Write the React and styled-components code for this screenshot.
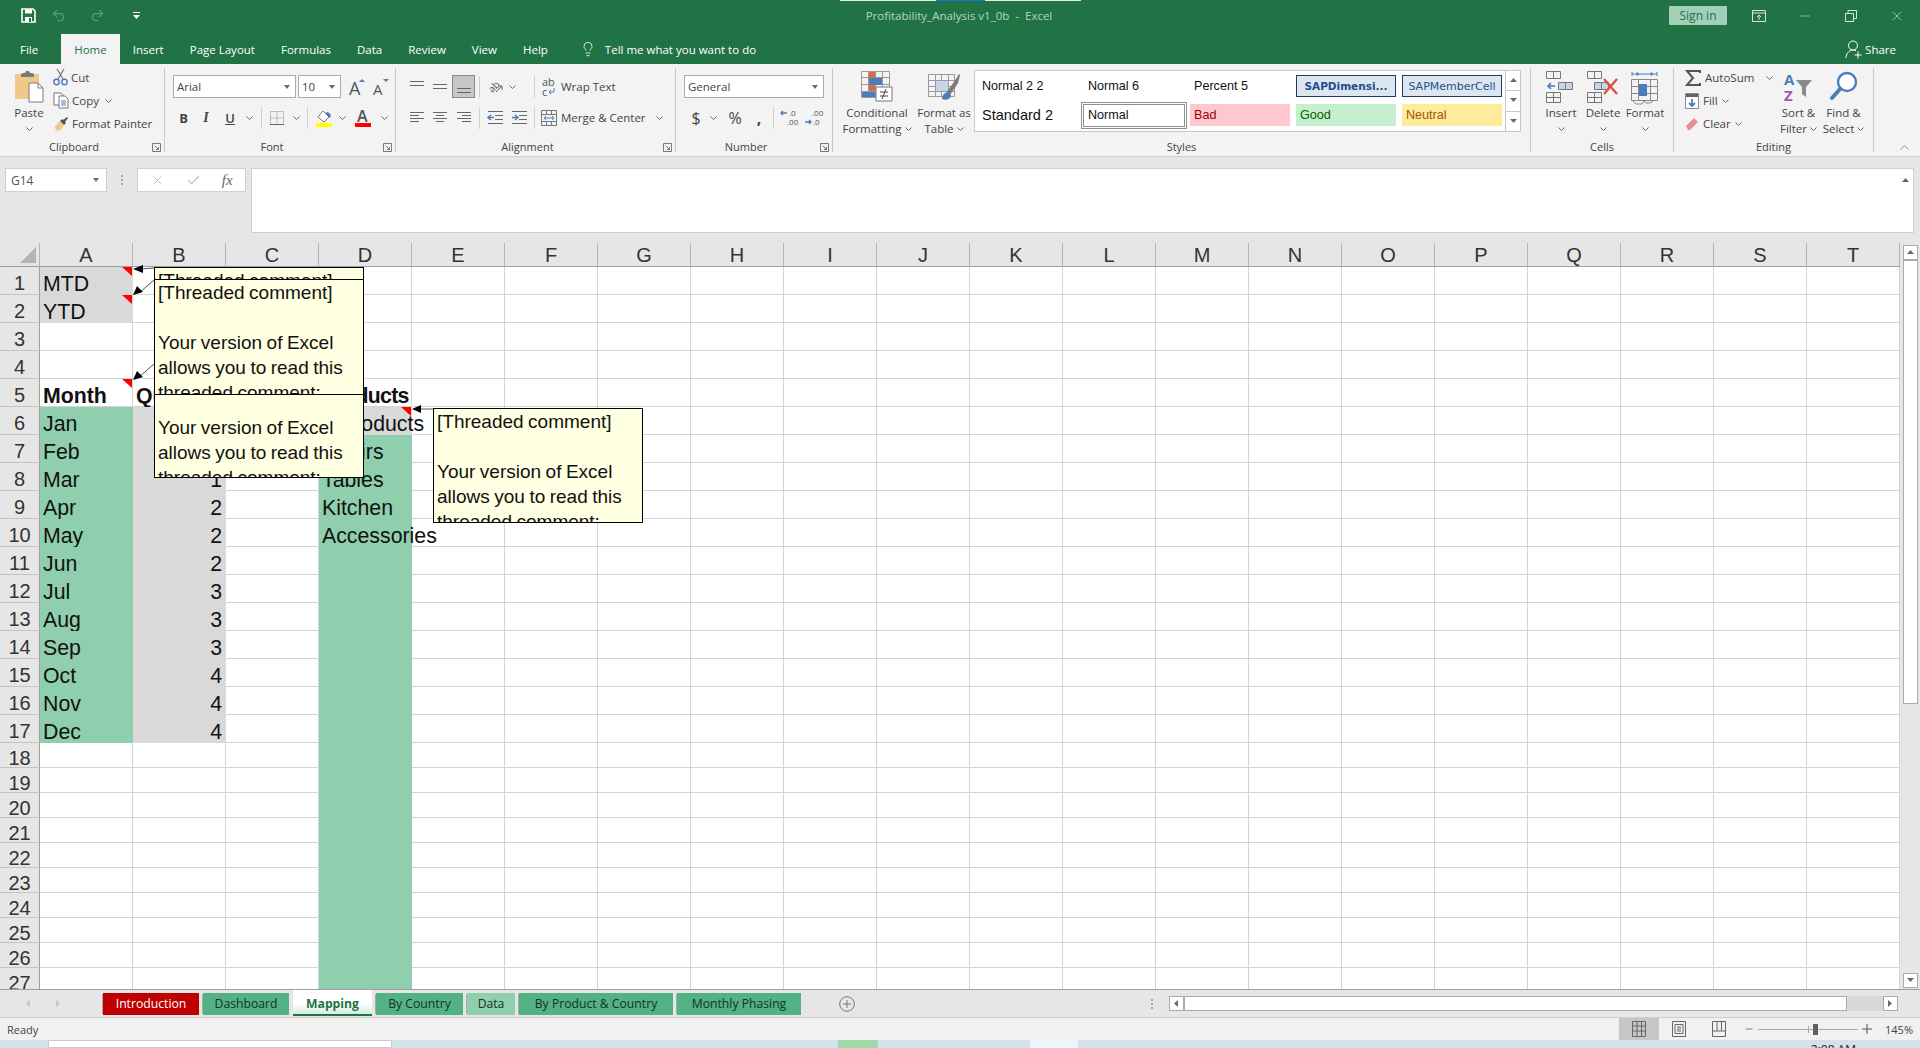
import React from 'react';
import styled, { createGlobalStyle } from 'styled-components';
import { Undo2, Redo2, Lightbulb, X, Minus, Check, ChevronUp } from 'lucide-react';

const GlobalStyle = createGlobalStyle`
  html, body {
    margin: 0;
    padding: 0;
    height: 100%;
    overflow: hidden;
    background: #e6e6e6;
    font-family: 'Open Sans', 'Liberation Sans', sans-serif;
    color: #444;
  }
  * { box-sizing: border-box; }
`;

const GREEN = '#217346';
const BLUE = '#4a7ebb';

const Page = styled.div`
  width: 1920px;
  height: 1048px;
  overflow: hidden;
  display: flex;
  flex-direction: column;
`;

/* title bar + menu */
const TopBar = styled.div`
  position: relative;
  height: 34px;
  padding-bottom: 3px;
  background: ${GREEN};
  display: grid;
  grid-template-columns: 1fr auto 1fr;
  align-items: center;
`;

const Progress = styled.div`
  position: absolute;
  top: 0;
  left: 840px;
  width: 241px;
  height: 1px;
  background: linear-gradient(90deg, #e8e8e8 0 40%, #0a78d4 40% 60%, #e8e8e8 60%);
`;

const Qat = styled.div`
  display: flex;
  align-items: center;
  padding-left: 21px;
`;

const QatBtn = styled.div`
  width: ${(p) => p.$w}px;
  display: flex;
  align-items: center;
  gap: 3px;
  color: ${(p) => p.$dim ? '#5a9a78' : '#fff'};
`;

const Title = styled.div`
  font-size: 11.5px;
  color: #b5d3c3;
  white-space: pre;
  padding-right: 2px;
`;

const WinControls = styled.div`
  display: flex;
  justify-content: flex-end;
  align-items: center;
  color: #d6e6dd;
`;

const SignIn = styled.div`
  width: 58px;
  height: 19px;
  background: #a2cfb7;
  color: ${GREEN};
  font-size: 12px;
  border-radius: 1px;
  display: flex;
  align-items: center;
  justify-content: center;
  margin-right: 9px;
`;

const WinBtn = styled.div`
  width: 46px;
  display: flex;
  justify-content: center;
  align-items: center;
`;

const MenuBar = styled.div`
  height: 30px;
  background: ${GREEN};
  display: flex;
  align-items: stretch;
  padding-left: 7px;
  font-size: 11.5px;
  color: #fff;
`;

const MenuItem = styled.div`
  padding: 0 13px;
  display: flex;
  align-items: center;
  background: ${(p) => p.$active ? '#f3f3f3' : 'transparent'};
  color: ${(p) => p.$active ? GREEN : '#fff'};
  &:first-child { margin-right: 10px; }
`;

const TellMe = styled.div`
  display: flex;
  align-items: center;
  gap: 9px;
  margin-left: 19px;
`;

const Share = styled.div`
  margin-left: auto;
  display: flex;
  align-items: center;
  gap: 3px;
  padding-right: 24px;
`;

/* ribbon */
const Ribbon = styled.div`
  position: relative;
  height: 93px;
  background: #f3f3f3;
  border-bottom: 1px solid #d2d2d2;
  padding-top: 4px;
  display: flex;
  align-items: flex-start;
  font-size: 11.5px;
  color: #444;
`;

const Group = styled.div`
  position: relative;
  width: ${(p) => p.$w}px;
  height: 84px;
  flex: none;
  border-right: 1px solid #c8c8c8;
  display: flex;
  flex-direction: column;
`;

const GroupBody = styled.div`
  height: 75px;
  display: flex;
  padding-left: ${(p) => p.$pl || 0}px;
`;

const GroupLabel = styled.div`
  text-align: center;
  line-height: 10px;
  font-size: 11px;
  padding-right: ${(p) => p.$launcher ? 16 : 0}px;
`;

const Launcher = styled.svg`
  position: absolute;
  right: 3px;
  bottom: 0;
`;

const BigBtn = styled.div`
  width: ${(p) => p.$w}px;
  flex: none;
  display: flex;
  flex-direction: column;
  align-items: center;
  line-height: 16px;
  text-align: center;
  white-space: nowrap;
`;

const BigIcon = styled.div`
  height: 37px;
  padding-top: 3px;
`;

const ChevLine = styled.div`
  display: flex;
  align-items: center;
  justify-content: center;
  gap: 3px;
  height: 16px;
`;

const SmallCol = styled.div`
  width: ${(p) => p.$w}px;
  margin-left: ${(p) => p.$ml || 0}px;
  margin-top: -2px;
  flex: none;
  display: flex;
  flex-direction: column;
`;

const SmallRow = styled.div`
  height: 23px;
  display: flex;
  align-items: center;
  gap: ${(p) => p.$gap ?? 3}px;
  white-space: nowrap;
`;

const TwoRows = styled.div`
  padding-top: 7px;
  display: flex;
  flex-direction: column;
  gap: 8px;
`;

const Row = styled.div`
  height: 23px;
  display: flex;
  align-items: center;
  white-space: nowrap;
`;

const Select = styled.div`
  width: ${(p) => p.$w}px;
  height: 23px;
  background: #fff;
  border: 1px solid #ababab;
  margin-right: ${(p) => p.$mr || 0}px;
  padding: 0 5px 0 3px;
  display: flex;
  align-items: center;
  justify-content: space-between;
  flex: none;
`;

const Caret = styled.span`
  width: 0;
  height: 0;
  border-left: 3.5px solid transparent;
  border-right: 3.5px solid transparent;
  border-top: 4px solid #6a6a6a;
`;

const Btn = styled.div`
  width: ${(p) => p.$w}px;
  height: 23px;
  flex: none;
  display: flex;
  align-items: center;
  justify-content: center;
  margin-left: ${(p) => p.$ml || 0}px;
  background: ${(p) => p.$on ? '#c6c6c6' : 'transparent'};
  border: ${(p) => p.$on ? '1px solid #8a8a8a' : 'none'};
`;

const BoldLetter = styled.span`
  font-size: 13px;
  font-weight: 700;
`;

const ItalicLetter = styled.span`
  font-size: 14px;
  font-style: italic;
  font-family: 'Liberation Serif', serif;
  font-weight: 700;
`;

const UnderLetter = styled.span`
  font-size: 13px;
  font-weight: 600;
  text-decoration: underline;
`;

const NumSign = styled.span`
  font-size: ${(p) => p.$fs || 16}px;
  font-weight: ${(p) => p.$bold ? 700 : 400};
  padding-left: 2px;
`;

const Sep = styled.div`
  width: 1px;
  height: 22px;
  flex: none;
  background: #d0d0d0;
  margin: 0 ${(p) => p.$mr ?? 3}px 0 ${(p) => p.$ml ?? 4}px;
`;

const Gallery = styled.div`
  margin: 2px 0 0 5px;
  width: 547px;
  height: 62px;
  flex: none;
  background: #fff;
  border: 1px solid #c8c8c8;
  display: flex;
`;

const GalleryGrid = styled.div`
  display: grid;
  grid-template-columns: repeat(5, 106px);
  grid-template-rows: 30px 28px;
  width: 530px;
`;

const StyleCell = styled.div`
  display: flex;
  align-items: center;
  padding: 0 3px;
`;

const StyleBox = styled.div`
  height: ${(p) => p.$selected ? 27 : 22}px;
  flex: none;
  display: flex;
  align-items: center;
  justify-content: ${(p) => p.$center ? 'center' : 'flex-start'};
  padding-left: ${(p) => p.$center ? 0 : 4}px;
  margin-left: ${(p) => p.$selected ? -3 : 0}px;
  margin-right: ${(p) => p.$selected ? -3 : 0}px;
  width: ${(p) => p.$selected ? 106 : 100}px;
  background: ${(p) => p.$bg || 'transparent'};
  color: ${(p) => p.$fg || '#111'};
  border: ${(p) => p.$border || 'none'};
  font-family: ${(p) => p.$mono ? "'DejaVu Sans', sans-serif" : "'Liberation Sans', sans-serif"};
  font-weight: ${(p) => p.$bold ? 700 : 400};
  font-size: ${(p) => p.$fs || 12.6}px;
  white-space: nowrap;
  overflow: hidden;
`;

const GalleryScroll = styled.div`
  flex: 1;
  border-left: 1px solid #c8c8c8;
  display: flex;
  flex-direction: column;
`;

const GalleryArrow = styled.div`
  flex: 1;
  display: flex;
  align-items: center;
  justify-content: center;
  background: #fff;
  color: #6a6a6a;
  & + & { border-top: 1px solid #c8c8c8; }
`;

const Collapse = styled.div`
  position: absolute;
  right: 8px;
  bottom: 1px;
  color: #555;
  display: flex;
`;

/* formula bar */
const FormulaBar = styled.div`
  height: 75px;
  background: #e6e6e6;
  display: flex;
  align-items: flex-start;
  padding: 11px 6px 0 5px;
  color: #555;
`;

const NameBox = styled.div`
  width: 102px;
  height: 24px;
  background: #fff;
  border: 1px solid #d0d0d0;
  display: flex;
  align-items: center;
  justify-content: space-between;
  padding: 0 7px 0 5px;
  font-size: 12px;
`;

const Dots = styled.div`
  width: 30px;
  height: 24px;
  display: flex;
  flex-direction: column;
  align-items: center;
  justify-content: center;
  gap: 2px;
  & span { width: 2px; height: 2px; background: #a8a8a8; }
`;

const FxBox = styled.div`
  width: 109px;
  height: 24px;
  background: #fff;
  border: 1px solid #d0d0d0;
  display: flex;
  align-items: center;
  justify-content: space-around;
  padding: 0 2px;
  color: #bdbdbd;
`;

const Fx = styled.span`
  font-family: 'Liberation Serif', serif;
  font-style: italic;
  font-size: 15px;
  color: #666;
`;

const FormulaInput = styled.div`
  flex: 1;
  height: 65px;
  margin-left: 5px;
  background: #fff;
  border: 1px solid #d0d0d0;
  display: flex;
  justify-content: flex-end;
  padding: 8px 4px 0 0;
  color: #666;
`;

/* sheet */
const SheetArea = styled.div`
  position: relative;
  margin-top: 11px;
  height: 747px;
  display: flex;
  background: #e6e6e6;
  border-bottom: 1px solid #9e9e9e;
`;

const Grid = styled.div`
  width: 1900px;
  height: 746px;
  overflow: hidden;
  background: #fff;
  display: grid;
  grid-template-columns: 40px repeat(20, 93px);
  grid-template-rows: 24px repeat(17, 28px) repeat(10, 25px);
  font-family: 'Liberation Sans', Arial, sans-serif;
  font-size: 21.3px;
  color: #111;
`;

const Corner = styled.div`
  background: #e6e6e6;
  border-right: 1px solid #b4b4b4;
  border-bottom: 1px solid #9e9e9e;
  position: relative;
  &::after {
    content: '';
    position: absolute;
    right: 3px;
    bottom: 3px;
    border-left: 16px solid transparent;
    border-bottom: 16px solid #b5b5b5;
  }
`;

const ColHead = styled.div`
  background: #e6e6e6;
  border-right: 1px solid #b4b4b4;
  border-bottom: 1px solid #9e9e9e;
  display: flex;
  align-items: center;
  justify-content: center;
  padding-top: 2px;
  font-size: 20px;
  color: #333;
`;

const RowHead = styled.div`
  background: #e6e6e6;
  border-right: 1px solid #9e9e9e;
  border-bottom: 1px solid #c4c4c4;
  display: flex;
  align-items: center;
  justify-content: center;
  padding-top: 5px;
  font-size: 20px;
  color: #333;
  overflow: visible;
  line-height: 20px;
`;

const Cell = styled.div`
  position: relative;
  min-width: 0;
  display: flex;
  align-items: center;
  justify-content: ${(p) => p.$right ? 'flex-end' : 'flex-start'};
  padding: 6px 3px 0 ${(p) => p.$indent || 3}px;
  line-height: 22px;
  white-space: nowrap;
  background: ${(p) => p.$fill || 'transparent'};
  border-right: 1px solid ${(p) => p.$fill ? p.$fill : '#d4d4d4'};
  border-bottom: 1px solid ${(p) => p.$fill ? p.$fill : '#d4d4d4'};
  font-weight: ${(p) => p.$bold ? 700 : 400};
  letter-spacing: ${(p) => p.$tight ? '-0.7px' : 'normal'};
  ${(p) => p.$note && `
    &::after {
      content: '';
      position: absolute;
      top: 0;
      right: 0;
      border-top: 9px solid #f00;
      border-left: 10px solid transparent;
    }
  `}
`;

const Arrows = styled.svg`
  position: absolute;
  left: 0;
  top: 0;
  z-index: 1;
  pointer-events: none;
`;

const Comment = styled.div`
  position: absolute;
  left: ${(p) => p.$x}px;
  top: ${(p) => p.$y}px;
  width: 210px;
  height: ${(p) => p.$h}px;
  overflow: hidden;
  background: #ffffe1;
  border: 1px solid #000;
  font-family: 'Liberation Sans', Arial, sans-serif;
  font-size: 19px;
  word-spacing: -0.8px;
  line-height: 25px;
  color: #111;
  padding: 0 0 0 3px;
  white-space: nowrap;
  z-index: ${(p) => p.$z || 2};
`;

const CommentText = styled.div`
  margin-top: ${(p) => p.$shift || 0}px;
`;

const ScrollTrack = styled.div`
  flex: 1;
  position: relative;
  display: flex;
  flex-direction: column;
  align-items: center;
  padding: 2px 0 1px;
  color: #6a6a6a;
`;

const ScrollBtn = styled.div`
  width: 15px;
  height: 15px;
  background: #fff;
  border: 1px solid #ababab;
  display: flex;
  align-items: center;
  justify-content: center;
`;

const ScrollThumb = styled.div`
  width: 15px;
  height: 444px;
  background: #fff;
  border: 1px solid #ababab;
  margin-bottom: auto;
`;

/* sheet tabs */
const TabBar = styled.div`
  height: 28px;
  background: #e6e6e6;
  border-bottom: 1px solid #d0d0d0;
  display: flex;
  align-items: flex-start;
  padding-left: 25px;
  font-size: 12.2px;
`;

const TabNav = styled.div`
  width: 76px;
  height: 27px;
  display: flex;
  align-items: center;
  gap: 23px;
  color: #c4c4c4;
`;

const Tab = styled.div`
  width: ${(p) => p.$w}px;
  height: ${(p) => p.$active ? 26 : 22}px;
  margin: ${(p) => p.$active ? 0 : 3}px 2px 0 2px;
  padding: ${(p) => p.$active ? '2px 0 0' : '0 0 2px'};
  flex: none;
  display: flex;
  align-items: center;
  justify-content: center;
  white-space: nowrap;
  background: ${(p) => p.$active ? 'linear-gradient(#fff 55%, #d3ecdf)' : p.$bg};
  color: ${(p) => p.$active ? GREEN : p.$fg || '#14331f'};
  font-weight: ${(p) => p.$active ? 700 : 400};
  border-bottom: ${(p) => p.$active ? `2px solid ${GREEN}` : 'none'};
  box-shadow: ${(p) => p.$active ? 'none' : '-2px 0 0 -1px #a8a8a8'};
`;

const AddSheet = styled.div`
  margin-left: 36px;
  height: 27px;
  display: flex;
  align-items: center;
`;

const TabRight = styled.div`
  margin-left: auto;
  display: flex;
  align-items: center;
  height: 27px;
  padding-right: 22px;
`;

const HScroll = styled.div`
  width: 729px;
  height: 15px;
  margin-left: 2px;
  display: flex;
  background: #d8d8d8;
  color: #6a6a6a;
`;

const HBtn = styled.div`
  width: 15px;
  background: #fff;
  border: 1px solid #ababab;
  display: flex;
  align-items: center;
  justify-content: center;
`;

const HThumb = styled.div`
  width: 663px;
  background: #fff;
  border: 1px solid #ababab;
  margin-right: auto;
`;

/* status bar */
const StatusBar = styled.div`
  height: 22px;
  background: #f1f1f1;
  display: flex;
  align-items: center;
  padding-left: 7px;
  font-size: 11px;
  color: #444;
`;

const StatusRight = styled.div`
  margin-left: auto;
  display: flex;
  align-items: center;
  height: 22px;
  padding-right: 7px;
`;

const ViewBtn = styled.div`
  width: 40px;
  height: 22px;
  display: flex;
  align-items: center;
  justify-content: center;
  background: ${(p) => p.$on ? '#c6c6c6' : 'transparent'};
`;

const ZoomMinus = styled.div`
  margin-left: 5px;
  display: flex;
`;

const Slider = styled.div`
  position: relative;
  width: 100px;
  height: 1px;
  margin: 0 4px 0 4px;
  background: #a8a8a8;
  &::after {
    content: '';
    position: absolute;
    left: 50px;
    top: -3px;
    width: 1px;
    height: 7px;
    background: #a8a8a8;
  }
`;

const SliderThumb = styled.div`
  position: absolute;
  left: 55px;
  top: -5px;
  width: 5px;
  height: 11px;
  background: #5f5f5f;
`;

const ZoomLevel = styled.span`
  margin-left: 13px;
`;

/* bit of the desktop below the window */
const Taskbar = styled.div`
  flex: 1;
  background: #d3e1e8;
  display: flex;
  align-items: stretch;
  overflow: hidden;
`;

const TaskWhite = styled.div`
  width: 344px;
  margin-left: 48px;
  background: #fff;
  border: 1px solid #c8c8c8;
`;

const TaskGreen = styled.div`
  width: 40px;
  margin-left: 446px;
  background: #a0d8a6;
`;

const TaskLight = styled.div`
  width: 48px;
  margin-left: 152px;
  background: #eef4f7;
`;

const Clock = styled.div`
  margin-left: auto;
  padding-right: 64px;
  font-size: 12px;
  line-height: 14px;
  margin-top: 3px;
  color: #222;
`;

/* ---- icons ---- */
const Ico = ({ w, h, children }) => (
  <svg width={w} height={h} viewBox={`0 0 ${w} ${h}`} fill="none" overflow="visible">{children}</svg>
);

const Chev = () => (
  <svg width="7" height="4" viewBox="0 0 7 4" fill="none"><path d="M.5.5l3 3 3-3" stroke="#666" /></svg>
);

const LaunchIcon = () => (
  <Launcher width="9" height="9" viewBox="0 0 9 9" fill="none">
    <path d="M.5 8.5v-8h8v8z M2.5 2.5l4 4M6.5 4v2.500H4" stroke="#777" />
  </Launcher>
);

const SaveIcon = () => (
  <Ico w={15} h={15}>
    <path d="M1 1h11l2 2v11H1z" stroke="#fff" strokeWidth="1.6" />
    <path d="M4 1.500h7v4H4zM4 14V9h7v5" fill="#fff" />
    <path d="M8 10h2v4H8z" fill={GREEN} />
  </Ico>
);

const ShareIcon = () => (
  <Ico w={17} h={19}>
    <circle cx="8" cy="5.500" r="4.500" stroke="#fff" />
    <path d="M1 18c0-4 3-8 7-8 1 0 2 .2 3 .7" stroke="#fff" />
    <path d="M13 11.500v7M9.500 15h7" stroke="#fff" />
  </Ico>
);

const CutIcon = () => (
  <Ico w={15} h={17}>
    <path d="M5 10L11 0M10 10L4 0" stroke="#7a7a7a" strokeWidth="1.3" />
    <circle cx="3.500" cy="13" r="2.700" stroke={BLUE} strokeWidth="1.4" />
    <circle cx="11.500" cy="13" r="2.700" stroke={BLUE} strokeWidth="1.4" />
  </Ico>
);

const PasteIcon = () => (
  <Ico w={30} h={31}>
    <rect x="1" y="3" width="24" height="25" fill="#f0c98a" />
    <path d="M7 3l2-1h2l1-2h3l1 2h2l2 1v3H7z" fill="#7a7a7a" />
    <path d="M15 12h9l5 5v14H15z" fill="#fff" stroke="#7a7a7a" />
    <path d="M24 12v5h5" stroke="#7a7a7a" />
  </Ico>
);

const CopyIcon = () => (
  <Ico w={16} h={17}>
    <path d="M1 1h7l2 2v10H1z" fill="#fff" stroke="#777" />
    <path d="M6 4h6l3 3v9H6z" fill="#fff" stroke="#777" />
    <path d="M8 9h5M8 11h5M8 13h5" stroke={BLUE} />
  </Ico>
);

const PainterIcon = () => (
  <Ico w={16} h={16}>
    <path d="M1 11l6-6 4 4-4 6-2-1-1 1-2-2 1-1z" fill="#f0c98a" />
    <path d="M7 5l2-2 1 1 4-3 1 1-3 4 1 1-2 2z" fill="#555" />
  </Ico>
);

const GrowA = ({ up, size }) => (
  <Ico w={20} h={20}>
    <text x="2" y="18" fontFamily="Open Sans" fontSize={size} fill="#555">A</text>
    <path d={up ? 'M12 5l3-3 3 3z' : 'M12 2l3 3 3-3z'} fill={BLUE} />
  </Ico>
);

const BorderIcon = () => (
  <Ico w={14} h={14}>
    <path d="M.5.5h13v13H.5zM7 .5v13M.5 7h13" stroke="#8a8a8a" strokeDasharray="1 1" />
    <path d="M0 13.500h14" stroke="#666" />
  </Ico>
);

const FillIcon = () => (
  <Ico w={18} h={19}>
    <path d="M3 9l5-6 6 6-5 5z" fill="#fff" stroke="#777" />
    <path d="M10 5l5 5 1-3-3-3z" fill={BLUE} />
    <path d="M1 15h16v4H1z" fill="#ff0" />
  </Ico>
);

const FontColorIcon = () => (
  <Ico w={18} h={19}>
    <text x="3" y="14" fontFamily="Open Sans" fontWeight="600" fontSize="16" fill="#555">A</text>
    <path d="M1 15h16v4H1z" fill="#f00" />
  </Ico>
);

const Lines = ({ rows }) => (
  <Ico w={14} h={15}>
    {rows.map(([y, x1, x2]) => <path key={y} d={`M${x1} ${y}.5H${x2}`} stroke="#666" />)}
  </Ico>
);

const OrientIcon = () => (
  <Ico w={17} h={17}>
    <text x="1" y="13" fontFamily="Open Sans" fontSize="10" fill="#555" transform="rotate(-45 6 9)">ab</text>
    <path d="M9 14l6-6M15 8v4M15 8h-4" stroke="#666" />
  </Ico>
);

const IndentIcon = ({ inc }) => (
  <Ico w={17} h={15}>
    <path d="M1 1.500h15M8 5.500h8M8 9.500h8M1 13.500h15" stroke="#666" />
    <path d={inc ? 'M1 7.500h6M4 5l3 2.500L4 10' : 'M7 7.500H1M4 5L1 7.500 4 10'} stroke={BLUE} strokeWidth="1.5" />
  </Ico>
);

const WrapIcon = () => (
  <Ico w={16} h={20}>
    <text x="1" y="9" fontFamily="Open Sans" fontSize="11" fill="#555">ab</text>
    <text x="1" y="19" fontFamily="Open Sans" fontSize="11" fill="#555">c</text>
    <path d="M13 11v4H8M10 13l-2 2 2 2" stroke={BLUE} />
  </Ico>
);

const MergeIcon = () => (
  <Ico w={16} h={16}>
    <path d="M.5.5h15v15H.5zM.5 4.500h15M.5 11.500h15M5.500.5v4M10.500.5v4M5.500 11.500v4M10.500 11.500v4" stroke="#777" />
    <path d="M3 8h10M5 6L3 8l2 2M11 6l2 2-2 2" stroke={BLUE} />
  </Ico>
);

const DecIcon = ({ inc }) => (
  <Ico w={18} h={17}>
    <path d={inc ? 'M1 13h6M5 11l2 2-2 2' : 'M1 4h6M3 2L1 4l2 2'} stroke={BLUE} strokeWidth="1.4" />
    <text x={inc ? 8 : 9} y="7" fontFamily="Open Sans" fontSize="8" fill="#555">{inc ? '.00' : '.0'}</text>
    <text x={inc ? 9 : 7} y="16" fontFamily="Open Sans" fontSize="8" fill="#555">{inc ? '.0' : '.00'}</text>
  </Ico>
);

const CondIcon = () => (
  <Ico w={32} h={31}>
    <path d="M.5.5h28v26H.5zM.5 6.500h28M.5 13.500h28M.5 20.500h28M7.500.5v26M14.500.5v26M21.500.5v26" stroke="#999" />
    <path d="M8 1h6v6H8zM8 14h6v6H8z" fill="#d9694a" />
    <path d="M8 7h13v7H8zM1 21h13v5H1z" fill={BLUE} />
    <path d="M15 16h16v14H15z" fill="#fff" stroke="#777" />
    <path d="M19 21h8M19 25h8M25 18l-4 10" stroke="#444" />
  </Ico>
);

const TableIcon = () => (
  <Ico w={32} h={31}>
    <path d="M.5 3.500h26v22H.5zM.5 9.500h26M.5 15.500h26M.5 20.500h26M7.500 3.500v22M13.500 3.500v22M20.500 3.500v22" stroke="#9a9a9a" />
    <path d="M8 10h12v10H8z" fill="#c3d6ea" />
    <path d="M18 22l10-14 3-5 1 1-2 8-8 12z" fill="#7a7a7a" />
    <path d="M14 28c0-4 3-7 6-6l3 2c0 4-5 6-9 4z" fill={BLUE} />
  </Ico>
);

const InsertIcon = () => (
  <Ico w={30} h={32}>
    <path d="M.5.5h14v7H.5zM7.500.5v7M.5 21.500h14v10H.5zM.5 26.500h14M7.500 21.500v10" stroke="#777" />
    <path d="M12.500 11.500h14v7h-14zM19.500 11.500v7" stroke="#777" fill="#c3d6ea" />
    <path d="M9 15H2M5 12l-3 3 3 3" stroke={BLUE} strokeWidth="1.6" />
  </Ico>
);

const DeleteIcon = () => (
  <Ico w={32} h={32}>
    <path d="M.5.5h14v7H.5zM7.500.5v7M.5 21.500h14v10H.5zM.5 26.500h14M7.500 21.500v10" stroke="#777" />
    <path d="M7.500 11.500h14v7h-14zM14.500 11.500v7" stroke="#777" fill="#c3d6ea" />
    <path d="M17 8l13 15M30 8L17 23" stroke="#d9543a" strokeWidth="2.4" />
  </Ico>
);

const FormatIcon = () => (
  <Ico w={30} h={34}>
    <path d="M2 3h25M2 1v4M27 1v4M9 3L7 1.500v3zM20 3l2-1.500v3z" stroke={BLUE} />
    <path d="M1.500 8.500h26v21h-26zM8.500 8.500v21M20.500 8.500v21M1.500 15.500h26M1.500 22.500h26" stroke="#888" />
    <path d="M9 13h8v12H9z" fill={BLUE} />
    <path d="M3 30l3 3h6l2-3M14 30l2 2h4l3-2" stroke="#888" />
  </Ico>
);

const SigmaIcon = () => (
  <Ico w={16} h={16}>
    <path d="M15 3V1H2l6 7-6 7h13v-2" stroke="#555" strokeWidth="2" />
  </Ico>
);

const FillDownIcon = () => (
  <Ico w={14} h={16}>
    <path d="M.5.5h13v15H.5z" fill="#fff" stroke="#888" />
    <path d="M1 1h12v3H1z" fill="#666" />
    <path d="M7 6v7M4 10l3 3 3-3" stroke={BLUE} strokeWidth="1.8" />
  </Ico>
);

const EraserIcon = () => (
  <Ico w={14} h={14}>
    <path d="M1 9l8-8 4 4-8 8H3z" fill="#ee8a9c" />
  </Ico>
);

const SortIcon = () => (
  <Ico w={30} h={32}>
    <text x="0" y="14" fontFamily="Open Sans" fontWeight="700" fontSize="15" fill={BLUE}>A</text>
    <text x="0" y="30" fontFamily="Open Sans" fontWeight="700" fontSize="15" fill="#9b59b6">Z</text>
    <path d="M12 9h16l-6 7v10l-4-3v-7z" fill="#8a8a8a" />
  </Ico>
);

const FindIcon = () => (
  <Ico w={30} h={32}>
    <circle cx="18" cy="11" r="9" stroke={BLUE} strokeWidth="2.4" fill="#fff" />
    <path d="M11 18L3 27" stroke={BLUE} strokeWidth="4" strokeLinecap="round" />
  </Ico>
);

const DesktopIcon = () => (
  <Ico w={14} h={12}>
    <path d="M.5.5h13v11H.5zM.5 3h13M7 10V5M5 7l2-2 2 2" stroke="#d6e6dd" />
  </Ico>
);

const RestoreIcon = () => (
  <Ico w={12} h={12}>
    <path d="M.5 3.500h8v8h-8zM3 3V.5h8.500v8H9" stroke="#d6e6dd" />
  </Ico>
);

const NormalView = () => (
  <Ico w={14} h={16}>
    <path d="M.5.5h13v15H.5zM5 .5v15M9.500.5v15M.5 5h13M.5 10h13" stroke="#666" />
  </Ico>
);

const LayoutView = () => (
  <Ico w={14} h={16}>
    <path d="M.5.5h13v15H.5z" stroke="#666" />
    <path d="M3 3.500h8v9H3zM5 6h4M5 8h4M5 10h4" stroke="#666" />
  </Ico>
);

const BreakView = () => (
  <Ico w={14} h={16}>
    <path d="M.5.5h13v15H.5zM.5 10h13M5 .5V10M9.500.5V10" stroke="#666" />
  </Ico>
);

const Tri = ({ dir }) => {
  const d = { up: 'M0 5l3.500-4L7 5z', down: 'M0 1l3.500 4L7 1z', left: 'M5 0L1 3.500 5 7z', right: 'M1 0l4 3.500L1 7z' }[dir];
  return <svg width="7" height="7" viewBox="0 0 7 7" fill="currentColor"><path d={d} /></svg>;
};

/* ---- data ---- */
const COLS = 'ABCDEFGHIJKLMNOPQRST'.split('');
const MONTHS = ['Jan', 'Feb', 'Mar', 'Apr', 'May', 'Jun', 'Jul', 'Aug', 'Sep', 'Oct', 'Nov', 'Dec'];
const PRODUCTS = { 7: 'Chairs', 8: 'Tables', 9: 'Kitchen', 10: 'Accessories' };
const MINT = '#8fcfad';
const SILVER = '#d9d9d9';

const cellProps = (r, c) => {
  if (c === 'A') {
    if (r === 1) return { text: 'MTD', $fill: SILVER, $note: true };
    if (r === 2) return { text: 'YTD', $fill: SILVER, $note: true };
    if (r === 5) return { text: 'Month', $bold: true, $note: true };
    if (r >= 6 && r <= 17) return { text: MONTHS[r - 6], $fill: MINT };
  }
  if (c === 'B') {
    if (r === 5) return { text: 'Quarter', $bold: true };
    if (r >= 6 && r <= 17) return { text: Math.ceil((r - 5) / 3), $fill: SILVER, $right: true };
  }
  if (c === 'D') {
    if (r === 5) return { text: 'Products', $bold: true, $tight: true };
    if (r === 6) return { text: 'Products', $fill: SILVER, $note: true, $indent: 21 };
    if (r >= 7) return { text: PRODUCTS[r] || '', $fill: MINT };
  }
  return {};
};

const TABS = [
  { name: 'Introduction', w: 96, bg: '#c00000', fg: '#fff' },
  { name: 'Dashboard', w: 86, bg: '#52b283' },
  { name: 'Mapping', w: 79, active: true },
  { name: 'By Country', w: 87, bg: '#52b283' },
  { name: 'Data', w: 48, bg: '#8fcfad' },
  { name: 'By Product & Country', w: 154, bg: '#52b283' },
  { name: 'Monthly Phasing', w: 124, bg: '#52b283' },
];

const SAP = { $mono: true, $fs: 11, $bg: '#dce6f1', $fg: '#1f4e8c', $border: '1px solid #1f3864', $center: true };

const STYLES = [
  { label: 'Normal 2 2' },
  { label: 'Normal 6' },
  { label: 'Percent 5' },
  { label: 'SAPDimensi...', ...SAP, $bold: true, $fs: 10.5 },
  { label: 'SAPMemberCell', ...SAP },
  { label: 'Standard 2', $fs: 14.5 },
  { label: 'Normal', $selected: true, $border: '3px double #8f8f8f', $bg: '#fff' },
  { label: 'Bad', $bg: '#ffc7ce', $fg: '#9c0006' },
  { label: 'Good', $bg: '#c6efce', $fg: '#006100' },
  { label: 'Neutral', $bg: '#ffeb9c', $fg: '#9c5700' },
];

const App = () => {
  return (
    <Page>
      <GlobalStyle />
      <TopBar>
        <Progress />
        <Qat>
          <QatBtn $w={30}><SaveIcon /></QatBtn>
          <QatBtn $w={39} $dim><Undo2 size={15} /><Chev /></QatBtn>
          <QatBtn $w={43} $dim><Redo2 size={15} /><Chev /></QatBtn>
          <QatBtn $w={12}><svg width="7" height="8" viewBox="0 0 7 8" fill="#fff"><path d="M0 0h7v1H0zM0 3h7L3.500 7z" /></svg></QatBtn>
        </Qat>
        <Title>{'Profitability_Analysis v1_0b  -  Excel'}</Title>
        <WinControls>
          <SignIn>Sign in</SignIn>
          <WinBtn><DesktopIcon /></WinBtn>
          <WinBtn><Minus size={14} strokeWidth={1} /></WinBtn>
          <WinBtn><RestoreIcon /></WinBtn>
          <WinBtn><X size={16} strokeWidth={1} /></WinBtn>
        </WinControls>
      </TopBar>

      <MenuBar>
        {['File', 'Home', 'Insert', 'Page Layout', 'Formulas', 'Data', 'Review', 'View', 'Help'].map((m) => (
          <MenuItem key={m} $active={m === 'Home'}>{m}</MenuItem>
        ))}
        <TellMe><Lightbulb size={16} strokeWidth={1.2} />Tell me what you want to do</TellMe>
        <Share><ShareIcon />Share</Share>
      </MenuBar>

      <Ribbon>
        <Group $w={165}>
          <GroupBody $pl={11}>
            <BigBtn $w={36}>
              <BigIcon><PasteIcon /></BigIcon>
              <div>Paste</div>
              <ChevLine><Chev /></ChevLine>
            </BigBtn>
            <SmallCol $w={104} $ml={6}>
              <SmallRow><CutIcon /> Cut</SmallRow>
              <SmallRow><CopyIcon /> Copy <Btn $w={14}><Chev /></Btn></SmallRow>
              <SmallRow><PainterIcon /> Format Painter</SmallRow>
            </SmallCol>
          </GroupBody>
          <GroupLabel $launcher>Clipboard</GroupLabel>
          <LaunchIcon />
        </Group>

        <Group $w={231}>
          <GroupBody $pl={8}>
            <TwoRows>
              <Row>
                <Select $w={123} $mr={2}>Arial<Caret /></Select>
                <Select $w={43}>10<Caret /></Select>
                <Btn $w={24} $ml={4}><GrowA up size={18} /></Btn>
                <Btn $w={24}><GrowA size={15} /></Btn>
              </Row>
              <Row>
                <Btn $w={21}><BoldLetter>B</BoldLetter></Btn>
                <Btn $w={24}><ItalicLetter>I</ItalicLetter></Btn>
                <Btn $w={24}><UnderLetter>U</UnderLetter></Btn>
                <Btn $w={14}><Chev /></Btn>
                <Sep $ml={5} />
                <Btn $w={24}><BorderIcon /></Btn>
                <Btn $w={14}><Chev /></Btn>
                <Sep $ml={4} />
                <Btn $w={26}><FillIcon /></Btn>
                <Btn $w={10}><Chev /></Btn>
                <Btn $w={32}><FontColorIcon /></Btn>
                <Btn $w={10}><Chev /></Btn>
              </Row>
            </TwoRows>
          </GroupBody>
          <GroupLabel $launcher>Font</GroupLabel>
          <LaunchIcon />
        </Group>

        <Group $w={280}>
          <GroupBody $pl={9}>
            <TwoRows>
              <Row>
                <Btn $w={23}><Lines rows={[[2, 0, 14], [6, 0, 14]]} /></Btn>
                <Btn $w={24}><Lines rows={[[5, 0, 14], [9, 0, 14]]} /></Btn>
                <Btn $w={23} $on><Lines rows={[[9, 0, 14], [13, 0, 14]]} /></Btn>
                <Sep />
                <Btn $w={24}><OrientIcon /></Btn>
                <Btn $w={10}><Chev /></Btn>
                <Sep $ml={17} $mr={6} />
                <SmallRow $gap={4}><WrapIcon />Wrap Text</SmallRow>
              </Row>
              <Row>
                <Btn $w={23}><Lines rows={[[2, 0, 14], [5, 0, 9], [8, 0, 14], [11, 0, 9]]} /></Btn>
                <Btn $w={24}><Lines rows={[[2, 0, 14], [5, 3, 11], [8, 0, 14], [11, 3, 11]]} /></Btn>
                <Btn $w={23}><Lines rows={[[2, 0, 14], [5, 5, 14], [8, 0, 14], [11, 5, 14]]} /></Btn>
                <Sep />
                <Btn $w={24}><IndentIcon /></Btn>
                <Btn $w={24}><IndentIcon inc /></Btn>
                <Sep $ml={3} $mr={6} />
                <SmallRow $gap={4}><MergeIcon />Merge &amp; Center</SmallRow>
                <Btn $w={14} $ml={7}><Chev /></Btn>
              </Row>
            </TwoRows>
          </GroupBody>
          <GroupLabel $launcher>Alignment</GroupLabel>
          <LaunchIcon />
        </Group>

        <Group $w={157}>
          <GroupBody $pl={8}>
            <TwoRows>
              <Row><Select $w={140}>General<Caret /></Select></Row>
              <Row>
                <Btn $w={22}><NumSign>$</NumSign></Btn>
                <Btn $w={14}><Chev /></Btn>
                <Btn $w={28}><NumSign>%</NumSign></Btn>
                <Btn $w={20}><NumSign $bold>,</NumSign></Btn>
                <Sep $ml={5} />
                <Btn $w={24}><DecIcon /></Btn>
                <Btn $w={24}><DecIcon inc /></Btn>
              </Row>
            </TwoRows>
          </GroupBody>
          <GroupLabel $launcher>Number</GroupLabel>
          <LaunchIcon />
        </Group>

        <Group $w={698}>
          <GroupBody $pl={2}>
            <BigBtn $w={84}>
              <BigIcon><CondIcon /></BigIcon>
              <div>Conditional</div>
              <ChevLine>Formatting <Chev /></ChevLine>
            </BigBtn>
            <BigBtn $w={50}>
              <BigIcon><TableIcon /></BigIcon>
              <div>Format as</div>
              <ChevLine>Table <Chev /></ChevLine>
            </BigBtn>
            <Gallery>
              <GalleryGrid>
                {STYLES.map(({ label, ...rest }) => (
                  <StyleCell key={label}><StyleBox {...rest}>{label}</StyleBox></StyleCell>
                ))}
              </GalleryGrid>
              <GalleryScroll>
                <GalleryArrow><Tri dir="up" /></GalleryArrow>
                <GalleryArrow><Tri dir="down" /></GalleryArrow>
                <GalleryArrow><Tri dir="down" /></GalleryArrow>
              </GalleryScroll>
            </Gallery>
          </GroupBody>
          <GroupLabel>Styles</GroupLabel>
        </Group>

        <Group $w={143}>
          <GroupBody $pl={9}>
            <BigBtn $w={42}>
              <BigIcon><InsertIcon /></BigIcon>
              <div>Insert</div>
              <ChevLine><Chev /></ChevLine>
            </BigBtn>
            <BigBtn $w={42}>
              <BigIcon><DeleteIcon /></BigIcon>
              <div>Delete</div>
              <ChevLine><Chev /></ChevLine>
            </BigBtn>
            <BigBtn $w={42}>
              <BigIcon><FormatIcon /></BigIcon>
              <div>Format</div>
              <ChevLine><Chev /></ChevLine>
            </BigBtn>
          </GroupBody>
          <GroupLabel>Cells</GroupLabel>
        </Group>

        <Group $w={200}>
          <GroupBody $pl={11}>
            <SmallCol $w={91}>
              <SmallRow $gap={4}><SigmaIcon />AutoSum <Btn $w={22}><Chev /></Btn></SmallRow>
              <SmallRow $gap={4}><FillDownIcon /> Fill <Chev /></SmallRow>
              <SmallRow $gap={4}><EraserIcon /> Clear <Chev /></SmallRow>
            </SmallCol>
            <BigBtn $w={45}>
              <BigIcon><SortIcon /></BigIcon>
              <div>Sort &amp;</div>
              <ChevLine>Filter <Chev /></ChevLine>
            </BigBtn>
            <BigBtn $w={45}>
              <BigIcon><FindIcon /></BigIcon>
              <div>Find &amp;</div>
              <ChevLine>Select <Chev /></ChevLine>
            </BigBtn>
          </GroupBody>
          <GroupLabel>Editing</GroupLabel>
        </Group>

        <Collapse><ChevronUp size={15} strokeWidth={1} /></Collapse>
      </Ribbon>

      <FormulaBar>
        <NameBox>G14<Caret /></NameBox>
        <Dots><span /><span /><span /></Dots>
        <FxBox><X size={15} strokeWidth={1.5} /><Check size={15} strokeWidth={2} /><Fx>fx</Fx></FxBox>
        <FormulaInput><Tri dir="up" /></FormulaInput>
      </FormulaBar>

      <SheetArea>
        <Grid>
          <Corner />
          {COLS.map((c) => <ColHead key={c}>{c}</ColHead>)}
          {Array.from({ length: 27 }, (_, i) => i + 1).map((r) => (
            <React.Fragment key={r}>
              <RowHead>{r}</RowHead>
              {COLS.map((c) => {
                const { text, ...rest } = cellProps(r, c);
                return <Cell key={c} {...rest}>{text}</Cell>;
              })}
            </React.Fragment>
          ))}
        </Grid>
        <ScrollTrack>
          <ScrollBtn><Tri dir="up" /></ScrollBtn>
          <ScrollThumb />
          <ScrollBtn><Tri dir="down" /></ScrollBtn>
        </ScrollTrack>

        <Arrows width="700" height="300" viewBox="0 0 700 300" fill="none">
          <path d="M154 25L140 26M154 37L139 50M154 121L139 134M433 166L420 166" stroke="#555" />
          <path d="M133 26l10-4v8zM133 52l4-9 6 6zM133 137l4-9 6 6zM412 166l9-4v8z" fill="#000" />
        </Arrows>
        <Comment $x={154} $y={24} $h={60} $z={2}>[Threaded comment]</Comment>
        <Comment $x={154} $y={36} $h={116} $z={3}>
          [Threaded comment]<br /><br />Your version of Excel<br />allows you to read this<br />threaded comment;
        </Comment>
        <Comment $x={154} $y={151} $h={84} $z={4}>
          <CommentText $shift={-5}>
            <br />Your version of Excel<br />allows you to read this<br />threaded comment;
          </CommentText>
        </Comment>
        <Comment $x={433} $y={165} $h={115} $z={2}>
          [Threaded comment]<br /><br />Your version of Excel<br />allows you to read this<br />threaded comment;
        </Comment>
      </SheetArea>

      <TabBar>
        <TabNav><Tri dir="left" /><Tri dir="right" /></TabNav>
        {TABS.map((t) => (
          <Tab key={t.name} $w={t.w} $bg={t.bg} $fg={t.fg} $active={t.active}>{t.name}</Tab>
        ))}
        <AddSheet>
          <svg width="16" height="16" viewBox="0 0 16 16" fill="none" stroke="#777">
            <circle cx="8" cy="8" r="7.300" /><path d="M8 4v8M4 8h8" />
          </svg>
        </AddSheet>
        <TabRight>
          <Dots><span /><span /><span /></Dots>
          <HScroll>
            <HBtn><Tri dir="left" /></HBtn>
            <HThumb />
            <HBtn><Tri dir="right" /></HBtn>
          </HScroll>
        </TabRight>
      </TabBar>

      <StatusBar>
        Ready
        <StatusRight>
          <ViewBtn $on><NormalView /></ViewBtn>
          <ViewBtn><LayoutView /></ViewBtn>
          <ViewBtn><BreakView /></ViewBtn>
          <ZoomMinus><Minus size={10} strokeWidth={1.5} /></ZoomMinus>
          <Slider><SliderThumb /></Slider>
          <svg width="10" height="10" viewBox="0 0 10 10" stroke="#555"><path d="M0 5h10M5 0v10" /></svg>
          <ZoomLevel>145%</ZoomLevel>
        </StatusRight>
      </StatusBar>

      <Taskbar>
        <TaskWhite />
        <TaskGreen />
        <TaskLight />
        <Clock>2:08 AM</Clock>
      </Taskbar>
    </Page>
  );
};

export default App;
